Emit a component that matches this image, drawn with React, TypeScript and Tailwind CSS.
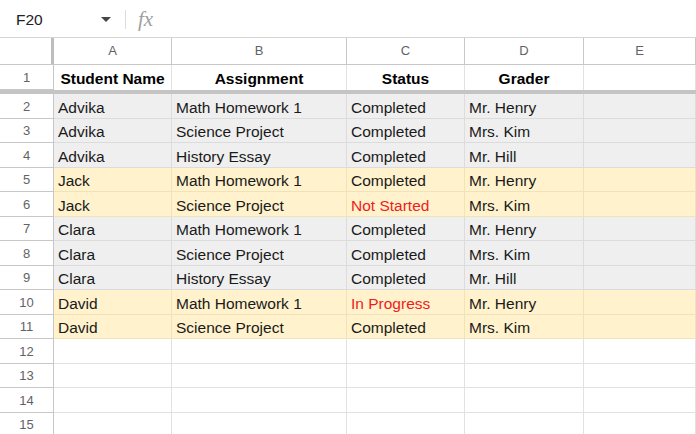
const cols = ["A", "B", "C", "D", "E"];

type Row = {
  name: string;
  task: string;
  status: string;
  grader: string;
  fill: "gray" | "yellow";
};

const rows: Row[] = [
  { name: "Advika", task: "Math Homework 1", status: "Completed", grader: "Mr. Henry", fill: "gray" },
  { name: "Advika", task: "Science Project", status: "Completed", grader: "Mrs. Kim", fill: "gray" },
  { name: "Advika", task: "History Essay", status: "Completed", grader: "Mr. Hill", fill: "gray" },
  { name: "Jack", task: "Math Homework 1", status: "Completed", grader: "Mr. Henry", fill: "yellow" },
  { name: "Jack", task: "Science Project", status: "Not Started", grader: "Mrs. Kim", fill: "yellow" },
  { name: "Clara", task: "Math Homework 1", status: "Completed", grader: "Mr. Henry", fill: "gray" },
  { name: "Clara", task: "Science Project", status: "Completed", grader: "Mrs. Kim", fill: "gray" },
  { name: "Clara", task: "History Essay", status: "Completed", grader: "Mr. Hill", fill: "gray" },
  { name: "David", task: "Math Homework 1", status: "In Progress", grader: "Mr. Henry", fill: "yellow" },
  { name: "David", task: "Science Project", status: "Completed", grader: "Mrs. Kim", fill: "yellow" },
];

const grid = "grid grid-cols-[54px_118px_175px_118px_119px_1fr]";

function RowNum({ n }: { n: number }) {
  return (
    <div className="flex items-center justify-center border-r border-b border-[#c7c7c7] bg-white pt-[1px] text-[13px] text-[#5f6368]">
      {n}
    </div>
  );
}

export default function App() {
  return (
    <div
      className="h-[434px] w-[696px] overflow-hidden bg-white text-[15.5px] text-[#1a1a1a]"
      style={{ fontFamily: '"Liberation Sans", Arial, sans-serif' }}
    >
      {/* formula bar */}
      <div className="flex h-[38px] items-center border-b border-[#d4d4d4] bg-white pt-[2px]">
        <div className="w-[96px] pl-[16px] text-[15.5px] text-[#202124]">F20</div>
        <svg width="10" height="6" viewBox="0 0 10 6" className="ml-[5px]">
          <path d="M0 0 L10 0 L5 5 Z" fill="#444746" />
        </svg>
        <div className="ml-[14px] h-[19px] w-px bg-[#dadce0]" />
        <div
          className="ml-[12px] text-[21px] italic text-[#a0a0a0]"
          style={{ fontFamily: '"Liberation Serif", serif' }}
        >
          fx
        </div>
      </div>

      {/* column letters */}
      <div className={`${grid} h-[27px]`}>
        <div className="border-b border-[#c7c7c7] bg-white">
          <div className="ml-auto h-full w-[3px] bg-[#bdbdbd]" />
        </div>
        {cols.map((c) => (
          <div
            key={c}
            className="flex items-center justify-center border-r border-b border-[#c7c7c7] bg-white text-[13px] text-[#5f6368]"
          >
            {c}
          </div>
        ))}
      </div>

      {/* header row */}
      <div className={`${grid} h-[25px]`}>
        <RowNum n={1} />
        {["Student Name", "Assignment", "Status", "Grader", ""].map((h, i) => (
          <div
            key={i}
            className="flex items-center justify-center border-r border-[#e1e1e1] pt-[2px] font-bold text-black"
          >
            {h}
          </div>
        ))}
      </div>
      <div className="h-[4px] bg-[#c4c4c4]" />

      {/* data rows */}
      {rows.map((r, i) => {
        const bg = r.fill === "gray" ? "bg-[#efefef]" : "bg-[#fff2cc]";
        const line = r.fill === "gray" ? "border-[#dcdcdc]" : "border-[#f1e3b8]";
        const cells = [r.name, r.task, r.status, r.grader, ""];
        return (
          <div key={i} className={`${grid} h-[24.5px]`}>
            <RowNum n={i + 2} />
            {cells.map((c, j) => (
              <div
                key={j}
                className={`flex items-center overflow-hidden whitespace-nowrap border-r border-b pl-[4px] pt-[3px] ${bg} ${line} ${
                  j === 2 && c !== "Completed" ? "text-[#ee1c1c]" : ""
                }`}
              >
                {c}
              </div>
            ))}
          </div>
        );
      })}

      {/* empty rows */}
      {[12, 13, 14, 15].map((n) => (
        <div key={n} className={`${grid} h-[24.5px]`}>
          <RowNum n={n} />
          {cols.map((c) => (
            <div key={c} className="border-r border-b border-[#e1e1e1] bg-white" />
          ))}
        </div>
      ))}
    </div>
  );
}
